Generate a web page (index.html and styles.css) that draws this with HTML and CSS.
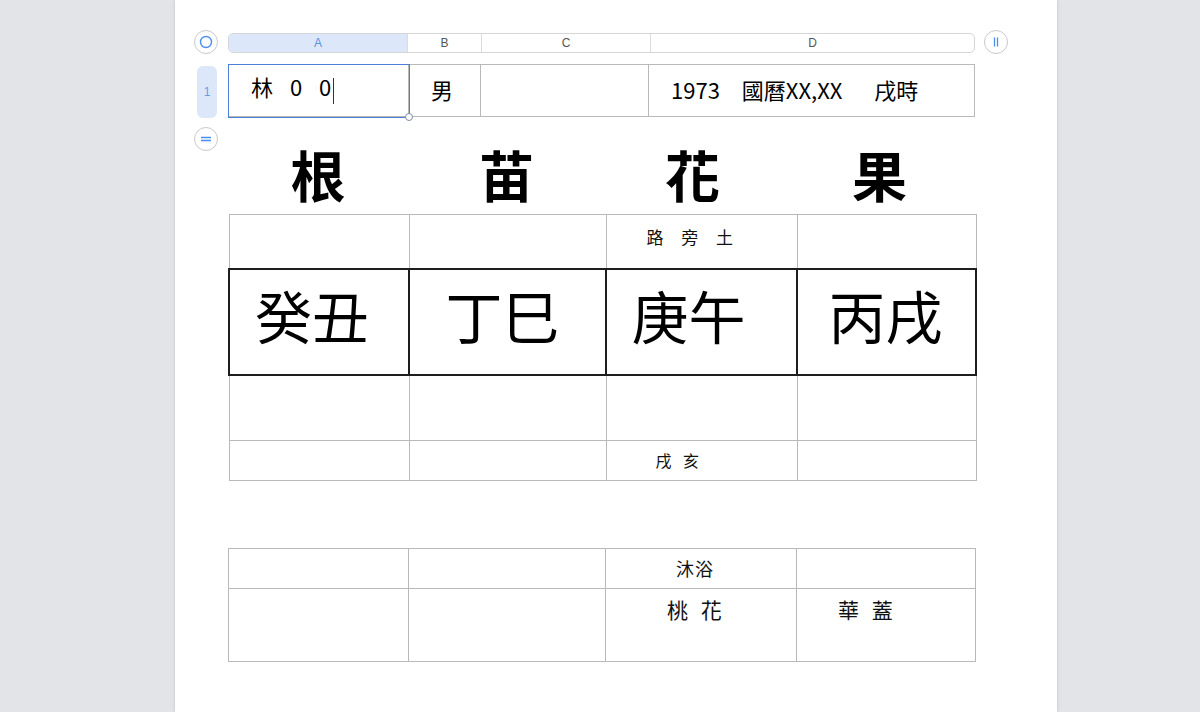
FILE: index.html
```html
<!DOCTYPE html>
<html lang="zh-Hant">
<head>
<meta charset="utf-8">
<title>根苗花果</title>
<link rel="stylesheet" href="styles.css">
</head>
<body>
<div class="desk">
  <div class="page">
    <div class="sheet">
      <div class="gutter gutter-top">
        <span class="round-btn"><svg width="14" height="14" viewBox="0 0 14 14"><circle cx="7" cy="7" r="5.5" fill="none" stroke="#4a8ef0" stroke-width="1.4"/></svg></span>
      </div>
      <div class="colbar">
        <div class="colhead sel a">A</div>
        <div class="colhead b">B</div>
        <div class="colhead c">C</div>
        <div class="colhead d">D</div>
      </div>
      <div class="gutter-right">
        <span class="round-btn"><svg width="14" height="14" viewBox="0 0 14 14"><path d="M5.5 2.5v9M8.5 2.5v9" stroke="#4a8ef0" stroke-width="1.3"/></svg></span>
      </div>

      <div class="gutter gutter-row">
        <div class="rowhead">1</div>
      </div>
      <table class="grid row1">
        <tr>
          <td class="ca selected"><span class="name">林 0 0</span><span class="caret"></span><span class="handle"></span></td>
          <td class="cb">男</td>
          <td class="cc"></td>
          <td class="cd">1973　國曆XX,XX　  戌時</td>
        </tr>
      </table>
      <div></div>

      <div class="gutter gutter-add">
        <span class="round-btn"><svg width="14" height="14" viewBox="0 0 14 14"><path d="M2 5.5h10M2 8.5h10" stroke="#4a8ef0" stroke-width="1.3"/></svg></span>
      </div>
      <div class="main">
        <div class="headings">
          <div>根</div>
          <div>苗</div>
          <div class="h3">花</div>
          <div class="h4">果</div>
        </div>
        <table class="grid chart">
          <colgroup><col class="w1"><col class="w2"><col class="w3"><col class="w4"></colgroup>
          <tr class="r-top">
            <td></td><td></td><td class="label l-road">路 旁 土</td><td></td>
          </tr>
          <tr class="r-big">
            <td class="b1">癸丑</td><td class="b2">丁巳</td><td class="b3">庚午</td><td class="b4">丙戌</td>
          </tr>
          <tr class="r-mid">
            <td></td><td></td><td></td><td></td>
          </tr>
          <tr class="r-low">
            <td></td><td></td><td class="label l-void">戌 亥</td><td></td>
          </tr>
        </table>

        <table class="grid chart2">
          <colgroup><col class="w1"><col class="w2"><col class="w3"><col class="w4"></colgroup>
          <tr class="r-a">
            <td></td><td></td><td class="label l-bath">沐浴</td><td></td>
          </tr>
          <tr class="r-b">
            <td></td><td></td><td class="label l-peach">桃 花</td><td class="label l-canopy">華 蓋</td>
          </tr>
        </table>
      </div>
    </div>
  </div>
</div>
</body>
</html>
```

FILE: styles.css
```css
html, body {
  margin: 0;
  padding: 0;
}

body {
  background: #e3e4e8;
  font-family: "Noto Sans CJK TC", "Noto Sans", sans-serif;
  color: #000;
}

.desk {
  width: 1200px;
  height: 712px;
  overflow: hidden;
  padding-left: 175px;
  box-sizing: border-box;
}

.page {
  width: 882px;
  height: 712px;
  background: #fff;
  box-shadow: 0 0 2px rgba(0, 0, 0, 0.12), 0 0 6px rgba(0, 0, 0, 0.06);
  padding-top: 33px;
  box-sizing: border-box;
}

.sheet {
  display: grid;
  grid-template-columns: 53px 747px 1fr;
  align-items: start;
}

.gutter {
  display: flex;
}

.round-btn {
  width: 24px;
  height: 24px;
  box-sizing: border-box;
  border: 1px solid #c9c9cc;
  border-radius: 50%;
  background: #fff;
  display: flex;
  align-items: center;
  justify-content: center;
}

.gutter-top {
  padding-left: 19px;
  margin-top: -3px;
}

.gutter-right {
  padding-left: 9px;
  margin-top: -3px;
}

.colbar {
  display: flex;
  height: 20px;
  box-sizing: border-box;
  border: 1px solid #d6d6d9;
  border-radius: 5px;
  overflow: hidden;
  font-family: "Liberation Sans", Arial, sans-serif;
  font-size: 12px;
  color: #555;
}

.colhead {
  display: flex;
  align-items: center;
  justify-content: center;
  border-left: 1px solid #dcdcdf;
}

.colhead.a { width: 178px; border-left: 0; }
.colhead.b { width: 73px; }
.colhead.c { width: 168px; }
.colhead.d { flex: 1; }

.colhead.sel {
  background: #dce8fa;
  color: #5b8fdc;
}

.gutter-row {
  padding-left: 22px;
  margin-top: 12px;
}

.rowhead {
  width: 20px;
  height: 52px;
  border-radius: 6px;
  background: #dce8fa;
  color: #6a9be2;
  font-family: "Liberation Sans", Arial, sans-serif;
  font-size: 12px;
  display: flex;
  align-items: center;
  justify-content: center;
}

.grid {
  border-collapse: collapse;
  table-layout: fixed;
}

.grid td {
  border: 1px solid #b9b9b9;
  padding: 0;
}

.row1 {
  width: 747px;
  margin-top: 10px;
}

.row1 tr {
  height: 52px;
}

.row1 td {
  font-size: 22px;
  line-height: 26px;
  padding: 0 0 4px 22px;
  vertical-align: middle;
  white-space: pre;
}

.row1 .ca { width: 157px; }
.row1 .cb { width: 49px; }
.row1 .cc { width: 145px; }

.name {
  word-spacing: 12px;
}

.selected {
  position: relative;
  outline: 1px solid #4b80d6;
}

.caret {
  display: inline-block;
  width: 1px;
  height: 26px;
  background: #333;
  vertical-align: middle;
  margin-left: 2px;
}

.handle {
  position: absolute;
  right: -5px;
  bottom: -5px;
  width: 8px;
  height: 8px;
  box-sizing: border-box;
  border: 1.3px solid #7b8fa8;
  border-radius: 50%;
  background: #fff;
}

.gutter-add {
  padding-left: 19px;
  margin-top: 9px;
}

.main {
  display: flex;
  flex-direction: column;
}

.headings {
  display: grid;
  grid-template-columns: 180px 197px 191px 179px;
  font-size: 55px;
  font-weight: 700;
  height: 96px;
  line-height: 82px;
  padding-top: 14px;
  box-sizing: border-box;
  text-align: center;
}

.headings .h3 { padding-right: 16px; }
.headings .h4 { padding-right: 12px; }

.chart, .chart2 {
  width: 747px;
}

.w1 { width: 180px; }
.w2 { width: 197px; }
.w3 { width: 191px; }
.w4 { width: 179px; }

.chart .r-top { height: 54px; }
.chart .r-big { height: 106px; }
.chart .r-mid { height: 66px; }
.chart .r-low { height: 40px; }

.chart .r-big td {
  border: 2px solid #1e1e1e;
  font-size: 57px;
  text-align: center;
  vertical-align: middle;
  line-height: 1;
  padding-bottom: 14px;
}

.chart .b1 { padding-right: 14px; }
.chart .b2 { padding-right: 10px; }
.chart .b3 { padding-right: 26px; }
.chart .b4 { padding-right: 2px; }

.chart2 {
  margin-top: 67px;
}

.chart2 .r-a { height: 40px; }
.chart2 .r-b { height: 73px; }

.label {
  white-space: pre;
  color: #111;
}

.grid .l-road {
  font-size: 17px;
  line-height: 22px;
  letter-spacing: 7px;
  vertical-align: top;
  padding: 11px 0 0 40px;
}

.grid .l-void {
  font-size: 16px;
  letter-spacing: 4px;
  vertical-align: middle;
  padding: 0 0 2px 49px;
}

.grid .l-bath {
  font-size: 18px;
  letter-spacing: 1px;
  vertical-align: middle;
  padding: 0 0 2px 70px;
}

.grid .l-peach, .grid .l-canopy {
  font-size: 21px;
  line-height: 28px;
  letter-spacing: 4px;
  vertical-align: top;
  padding-top: 6px;
}

.grid .l-peach { padding-left: 61px; }
.grid .l-canopy { padding-left: 41px; }
```
